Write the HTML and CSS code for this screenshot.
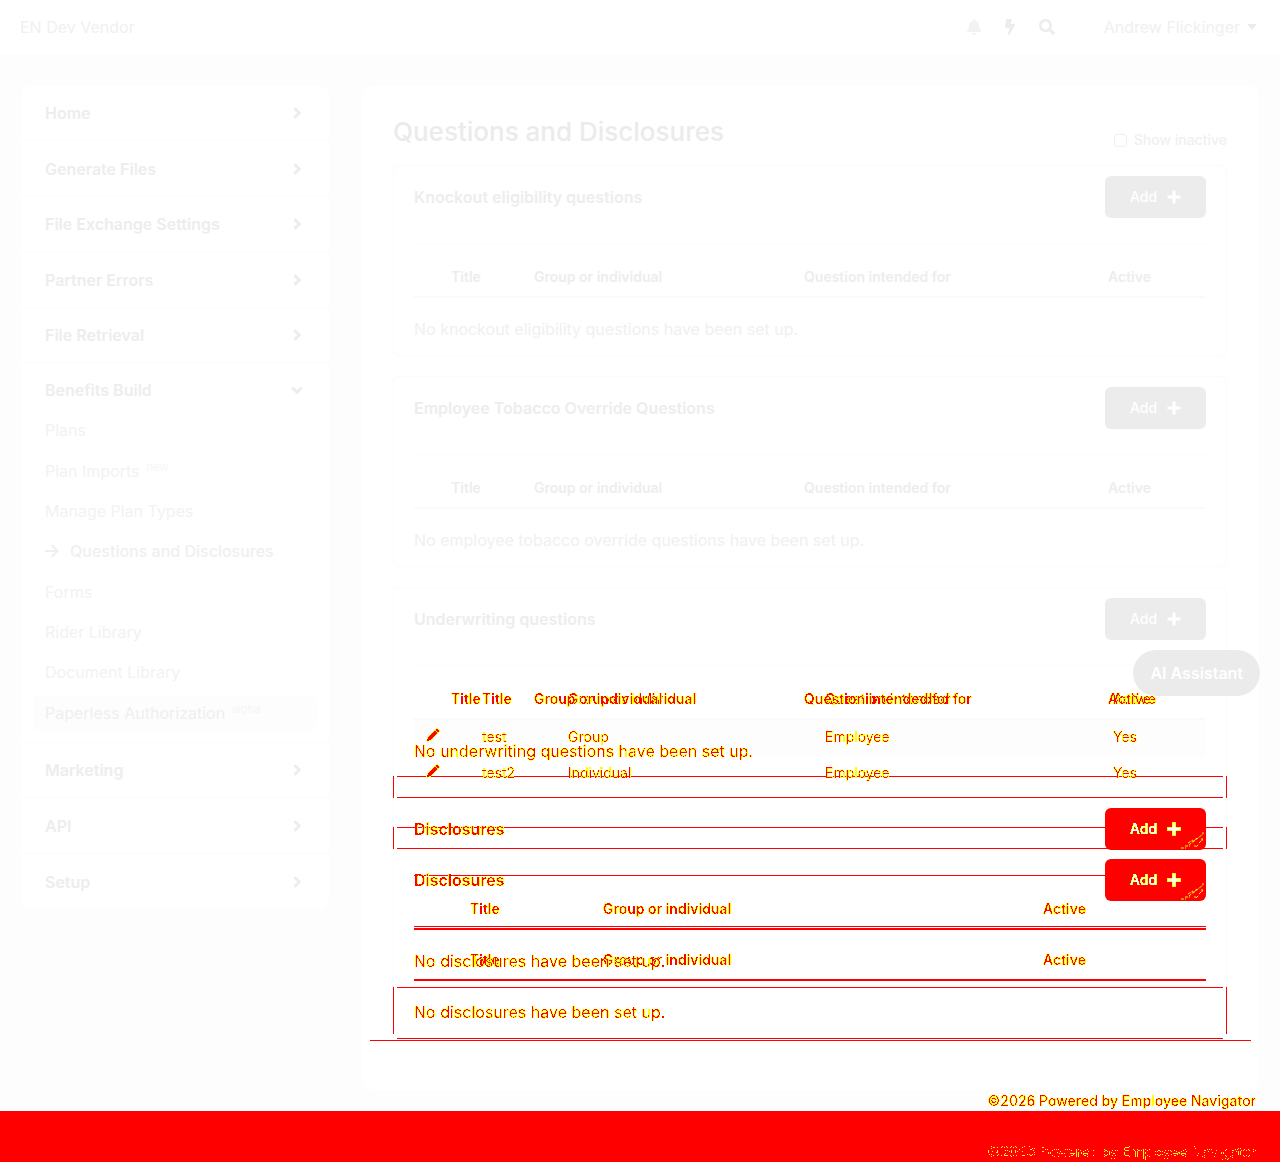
FILE: index.html
```html
<!DOCTYPE html>
<html lang="en">
<head>
    <meta charset="UTF-8">
    <meta name="viewport" content="width=device-width, initial-scale=1.0">
    <title>Questions and Disclosures</title>
    <link rel="stylesheet" href="styles.css">
</head>
<body>
    <!-- icons and the edge filters for changed text -->
    <svg class="defs" width="0" height="0" aria-hidden="true">
        <filter id="edge-red" color-interpolation-filters="sRGB" x="-5%" y="-5%" width="110%" height="110%">
            <feColorMatrix values="0 0 0 0 1  0 0 0 1 0  0 0 0 0 0  0 0 0 1 0"/>
            <feComponentTransfer>
                <feFuncG type="discrete" tableValues="1 1 1 1 0"/>
                <feFuncA type="discrete" tableValues="0 1 1 1 1 1 1 1 1 1 1 1"/>
            </feComponentTransfer>
        </filter>
        <filter id="edge-white" color-interpolation-filters="sRGB" x="-5%" y="-5%" width="110%" height="110%">
            <feColorMatrix values="0 0 0 0 1  0 0 0 0 1  0 0 0 1 0  0 0 0 1 0"/>
            <feComponentTransfer>
                <feFuncB type="discrete" tableValues="0 0 0 1 1"/>
                <feFuncA type="discrete" tableValues="0 1 1 1 1 1 1 1"/>
            </feComponentTransfer>
        </filter>
        <filter id="edge-only" color-interpolation-filters="sRGB" x="-5%" y="-5%" width="110%" height="110%">
            <feColorMatrix values="0 0 0 0 1  0 0 0 0 1  0 0 0 0 0  0 0 0 1 0"/>
            <feComponentTransfer>
                <feFuncA type="discrete" tableValues="0 0 1 1 0 0 0 0"/>
            </feComponentTransfer>
        </filter>
        <symbol id="right" viewBox="0 0 12 12"><path d="M3.5 1.2 8.3 6l-4.8 4.8" fill="none" stroke="currentColor" stroke-width="3"/></symbol>
        <symbol id="down" viewBox="0 0 12 12"><path d="M1.2 3.5 6 8.3l4.8-4.8" fill="none" stroke="currentColor" stroke-width="3"/></symbol>
        <symbol id="plus" viewBox="0 0 14 14"><path d="M5.5.5h3v5h5v3h-5v5h-3v-5h-5v-3h5z"/></symbol>
        <symbol id="arrow" viewBox="0 0 14 14"><path d="M0 7h12M6.5 1l6 6-6 6" fill="none" stroke="currentColor" stroke-width="2"/></symbol>
        <symbol id="pencil" viewBox="0 0 14 14"><path d="M10.6 1.2c.5-.5 1.1-.5 1.6 0l.7.7c.5.5.5 1.1 0 1.6l-1 1-2.3-2.3zM9 2.8l2.3 2.3-6.9 6.9-3.4 1 1-3.4zM2.6 10.2l-.5 1.8 1.7-.5z" fill-rule="evenodd" stroke="currentColor" stroke-width=".8"/></symbol>
        <symbol id="scratch" viewBox="0 0 24 18"><path d="M0 17h5M4 15h5M7 12l5-3M8 14l8-7M12 11l10-8M15 16l3-3M18 12l4-4M21 10v-3M13 15h2M22 3V1" fill="none" stroke="#ff0" stroke-width="1" stroke-dasharray="3 1"/></symbol>
    </svg>

    <header>
        <a class="brand" href="#">EN Dev Vendor</a>
        <div class="tools">
            <button class="tool light" aria-label="Notifications"><svg width="14" height="16" viewBox="0 0 448 512"><path d="M224 512c35.32 0 63.97-28.65 63.97-64H160.03c0 35.35 28.65 64 63.97 64zm215.39-149.71c-19.32-20.76-55.47-51.99-55.47-154.29 0-77.7-54.48-139.9-127.94-155.16V32c0-17.67-14.32-32-31.98-32s-31.98 14.33-31.98 32v20.84C118.56 68.1 64.08 130.3 64.08 208c0 102.3-36.15 133.53-55.47 154.29-6 6.45-8.66 14.16-8.61 21.71.11 16.4 12.98 32 32.1 32h383.8c19.12 0 32-15.6 32.1-32 .05-7.55-2.61-15.27-8.61-21.71z"/></svg></button>
            <button class="tool" aria-label="Quick links"><svg width="10" height="16" viewBox="0 0 320 512"><path d="M296 160H180.6l42.6-129.8C227.2 15 215.7 0 200 0H56C44 0 33.8 8.9 32.2 20.8l-32 240C-1.7 275.2 9.5 288 24 288h118.7L96.6 482.5c-3.6 15.2 8 29.5 23.3 29.5 8.4 0 16.4-4.4 20.8-12l176-304c9.3-15.9-2.2-36-20.7-36z"/></svg></button>
            <button class="tool" aria-label="Search"><svg width="16" height="16" viewBox="0 0 512 512"><path d="M505 442.7L405.3 343c-4.5-4.5-10.6-7-17-7H372c27.6-35.3 44-79.7 44-128C416 93.1 322.9 0 208 0S0 93.1 0 208s93.1 208 208 208c48.3 0 92.7-16.4 128-44v16.3c0 6.4 2.5 12.5 7 17l99.7 99.7c9.4 9.4 24.6 9.4 33.9 0l28.3-28.3c9.4-9.4 9.4-24.6.1-34zM208 336c-70.7 0-128-57.2-128-128 0-70.7 57.2-128 128-128 70.7 0 128 57.2 128 128 0 70.7-57.2 128-128 128z"/></svg></button>
        </div>
        <button class="user">Andrew Flickinger <svg width="10" height="6" viewBox="0 0 10 6"><path d="M0 0h10L5 6z"/></svg></button>
    </header>

    <div class="page">
        <nav class="sidebar">
            <a class="item" href="#">Home <svg width="12" height="12"><use href="#right"/></svg></a>
            <a class="item" href="#">Generate Files <svg width="12" height="12"><use href="#right"/></svg></a>
            <a class="item" href="#">File Exchange Settings <svg width="12" height="12"><use href="#right"/></svg></a>
            <a class="item" href="#">Partner Errors <svg width="12" height="12"><use href="#right"/></svg></a>
            <a class="item" href="#">File Retrieval <svg width="12" height="12"><use href="#right"/></svg></a>
            <div class="group">
                <a class="item open" href="#">Benefits Build <svg width="12" height="12"><use href="#down"/></svg></a>
                <ul>
                    <li><a href="#">Plans</a></li>
                    <li><a href="#">Plan Imports <small>new</small></a></li>
                    <li><a href="#">Manage Plan Types</a></li>
                    <li><a class="active" href="#"><svg width="14" height="14"><use href="#arrow"/></svg>Questions and Disclosures</a></li>
                    <li><a href="#">Forms</a></li>
                    <li><a href="#">Rider Library</a></li>
                    <li><a href="#">Document Library</a></li>
                    <li><a class="hovered" href="#">Paperless Authorization <small>alpha</small></a></li>
                </ul>
            </div>
            <a class="item" href="#">Marketing <svg width="12" height="12"><use href="#right"/></svg></a>
            <a class="item" href="#">API <svg width="12" height="12"><use href="#right"/></svg></a>
            <a class="item last" href="#">Setup <svg width="12" height="12"><use href="#right"/></svg></a>
        </nav>

        <main>
            <div class="title-row">
                <h1>Questions and Disclosures</h1>
                <label for="inactive"><input type="checkbox" id="inactive">Show inactive</label>
            </div>

            <section class="panel">
                <div class="panel-head">
                    <h2>Knockout eligibility questions</h2>
                    <button class="add">Add <svg width="14" height="14"><use href="#plus"/></svg></button>
                </div>
                <table class="questions">
                    <thead><tr><th></th><th>Title</th><th>Group or individual</th><th>Question intended for</th><th>Active</th></tr></thead>
                </table>
                <p class="empty">No knockout eligibility questions have been set up.</p>
            </section>

            <section class="panel">
                <div class="panel-head">
                    <h2>Employee Tobacco Override Questions</h2>
                    <button class="add">Add <svg width="14" height="14"><use href="#plus"/></svg></button>
                </div>
                <table class="questions">
                    <thead><tr><th></th><th>Title</th><th>Group or individual</th><th>Question intended for</th><th>Active</th></tr></thead>
                </table>
                <p class="empty">No employee tobacco override questions have been set up.</p>
            </section>

            <section class="panel panel-top">
                <div class="panel-head">
                    <h2>Underwriting questions</h2>
                    <button class="add">Add <svg width="14" height="14"><use href="#plus"/></svg></button>
                </div>
            </section>

            <!-- both versions share one grid cell -->
            <div class="versions">
                <div class="version after">
                    <section class="panel-body rows">
                        <table class="filled">
                            <thead><tr><th></th><th><span class="diff">Title</span></th><th><span class="diff">Group or individual</span></th><th><span class="diff">Question intended for</span></th><th><span class="diff">Active</span></th></tr></thead>
                            <tbody>
                                <tr><td><a class="diff" href="#" aria-label="Edit test"><svg width="14" height="14"><use href="#pencil"/></svg></a></td><td><span class="diff">test</span></td><td><span class="diff">Group</span></td><td><span class="diff">Employee</span></td><td><span class="diff">Yes</span></td></tr>
                                <tr><td><a class="diff" href="#" aria-label="Edit test2"><svg width="14" height="14"><use href="#pencil"/></svg></a></td><td><span class="diff">test2</span></td><td><span class="diff">Individual</span></td><td><span class="diff">Employee</span></td><td><span class="diff">Yes</span></td></tr>
                            </tbody>
                        </table>
                    </section>
                    <div class="seam"></div>
                    <section class="panel-body disclosures">
                        <div class="panel-head">
                            <h2 class="diff">Disclosures</h2>
                            <button class="add changed"><span class="diff-white">Add <svg width="14" height="14"><use href="#plus"/></svg></span><svg class="scratch" width="24" height="18"><use href="#scratch"/></svg></button>
                        </div>
                        <table class="short">
                            <thead><tr><th></th><th><span class="diff">Title</span></th><th><span class="diff">Group or individual</span></th><th><span class="diff">Active</span></th></tr></thead>
                        </table>
                        <p class="empty"><span class="diff">No disclosures have been set up.</span></p>
                    </section>
                    <div class="bottom-line"></div>
                </div>

                <div class="version before">
                    <section class="panel-body plain">
                        <table class="questions">
                            <thead><tr><th></th><th><span class="diff">Title</span></th><th><span class="diff">Group or individual</span></th><th><span class="diff">Question intended for</span></th><th><span class="diff">Active</span></th></tr></thead>
                        </table>
                        <p class="empty"><span class="diff">No underwriting questions have been set up.</span></p>
                    </section>
                    <div class="seam"></div>
                    <section class="panel-body disclosures">
                        <div class="panel-head">
                            <h2 class="diff">Disclosures</h2>
                            <button class="add changed"><span class="diff-white">Add <svg width="14" height="14"><use href="#plus"/></svg></span><svg class="scratch" width="24" height="18"><use href="#scratch"/></svg></button>
                        </div>
                        <table class="short">
                            <thead><tr><th></th><th><span class="diff">Title</span></th><th><span class="diff">Group or individual</span></th><th><span class="diff">Active</span></th></tr></thead>
                        </table>
                        <p class="empty"><span class="diff">No disclosures have been set up.</span></p>
                    </section>
                    <div class="seam tail"></div>
                    <div class="card-line"></div>
                </div>
            </div>
        </main>
    </div>

    <footer>
        <p class="credit"><span class="diff">©2026 Powered by Employee Navigator</span></p>
        <p class="credit added"><span class="diff-edge">©2026 Powered by Employee Navigator</span></p>
    </footer>

    <button class="assistant">AI Assistant</button>
</body>
</html>
```
FILE: styles.css
```css
* {
    box-sizing: border-box;
}
body {
    font-family: Inter, "Liberation Sans", sans-serif;
    font-size: 16px;
    line-height: 24px;
    margin: 0;
    color: #ededed;
    background-color: #fdfdfd;
}
a {
    color: inherit;
    text-decoration: none;
}
button {
    font: inherit;
    color: inherit;
    background: none;
    border: none;
    padding: 0;
    cursor: pointer;
}
svg {
    fill: currentColor;
}
h1, h2, p, ul {
    margin: 0;
    padding: 0;
}
.defs {
    position: absolute;
}
header {
    display: flex;
    align-items: center;
    height: 54px;
    padding: 0 23px 0 20px;
    background-color: #fff;
    color: #f0f0f0;
}
.brand {
    margin-right: auto;
}
.tools {
    display: flex;
    align-items: center;
    gap: 24px;
    margin-right: 49px;
    color: #ececec;
}
.tool {
    display: flex;
}
.light {
    color: #f2f2f2;
}
.user {
    display: flex;
    align-items: center;
    gap: 7px;
}
.user svg {
    color: #ebebeb;
}

.page {
    display: flex;
    align-items: flex-start;
    gap: 33px;
    padding: 32px 21px 0;
}
.sidebar {
    flex: 0 0 308px;
    background-color: #fff;
    border-radius: 10px;
}
.item {
    display: flex;
    align-items: center;
    justify-content: space-between;
    height: 55px;
    padding: 0 26px 0 24px;
    border-bottom: 1px solid #fbfbfb;
    font-weight: 600;
}
.item:nth-child(even) {
    height: 56px;
}
.open, .last {
    border-bottom: none;
}
.group {
    padding-bottom: 9px;
    border-bottom: 1px solid #fbfbfb;
}
.group .item {
    height: 47px;
    padding-top: 7px;
}
.sidebar ul {
    list-style: none;
    padding: 0 12px;
}
.sidebar li {
    padding: 2px 0;
}
.sidebar li:nth-child(3n+1) {
    margin-bottom: 1px;
}
.sidebar li a {
    display: flex;
    align-items: center;
    height: 36px;
    padding: 0 12px;
    border-radius: 6px;
    color: #f2f2f2;
}
.sidebar small {
    font-size: 11px;
    line-height: 12px;
    margin: 0 0 8px 7px;
    color: #f6f6f6;
}
.sidebar li .active {
    gap: 11px;
    font-weight: 500;
    color: #efefef;
}
.sidebar li .hovered {
    background-color: #fdfdfd;
    color: #efefef;
}

main {
    flex: 1;
    min-width: 0;
    padding: 28px 32px 49px 31px;
    background-color: #fff;
    border-radius: 10px;
}
.title-row {
    display: flex;
    justify-content: space-between;
    align-items: flex-start;
    height: 51px;
}
h1 {
    font-size: 26px;
    line-height: 36px;
    font-weight: 500;
    color: #ebebeb;
}
.title-row label {
    display: flex;
    align-items: center;
    gap: 7px;
    margin-top: 14px;
    font-size: 14px;
    font-weight: 500;
    color: #f0f0f0;
}
.title-row input {
    appearance: none;
    width: 13px;
    height: 13px;
    margin: 0;
    border: 1px solid #f0f0f0;
    border-radius: 3px;
}
.panel {
    padding: 10px 20px 14px;
    margin-bottom: 20px;
    border: 1px solid #fbfbfb;
    border-radius: 4px;
}
.panel-top {
    padding-bottom: 0;
    margin-bottom: 0;
    border-bottom: none;
    border-radius: 4px 4px 0 0;
}
.panel-head {
    display: flex;
    align-items: center;
    justify-content: space-between;
    padding-bottom: 25px;
    border-bottom: 1px solid #fbfbfb;
}
h2 {
    font-size: 16px;
    line-height: 24px;
    font-weight: 600;
}
.add {
    display: flex;
    align-items: center;
    justify-content: center;
    gap: 10px;
    width: 101px;
    height: 42px;
    border-radius: 6px;
    background-color: #ececec;
    color: #fff;
    font-size: 14px;
    font-weight: 500;
}
table {
    width: 100%;
    table-layout: fixed;
    border-spacing: 0;
    font-size: 14px;
    line-height: 20px;
    text-align: left;
}
th {
    height: 54px;
    padding: 23px 0 9px 12px;
    border-bottom: 2px solid #fafafa;
    font-weight: 600;
    white-space: nowrap;
}
td {
    height: 36px;
    padding: 7px 0 9px 12px;
}
td svg {
    display: block;
}
tbody tr:first-child {
    background-color: #fdfdfd;
}
.questions th:nth-child(1) { width: 25px; }
.questions th:nth-child(2) { width: 83px; }
.questions th:nth-child(3) { width: 270px; }
.questions th:nth-child(4) { width: 304px; }
.filled th:nth-child(1) { width: 56px; }
.filled th:nth-child(2) { width: 86px; }
.filled th:nth-child(3) { width: 257px; }
.filled th:nth-child(4) { width: 288px; }
.short th:nth-child(1) { width: 44px; }
.short th:nth-child(2) { width: 133px; }
.short th:nth-child(3) { width: 440px; }
.empty {
    padding-top: 19px;
    color: #f0f0f0;
}

/* changed text: red core, yellow edge */
.diff {
    display: inline-block;
    filter: url(#edge-red);
}
.diff-white {
    display: flex;
    align-items: center;
    gap: 10px;
    filter: url(#edge-white);
}
.diff-edge {
    display: inline-block;
    filter: url(#edge-only);
}
.versions {
    display: grid;
}
.version {
    grid-area: 1 / 1;
    min-width: 0;
}
.panel-body {
    padding: 0 21px;
}
.after .panel-body {
    padding: 0 20px;
    border: solid #fbfbfb;
    border-width: 0 1px;
}
.rows {
    min-height: 161px;
}
.plain {
    min-height: 110px;
}
.version .disclosures {
    padding-top: 10px;
    padding-bottom: 14px;
}
.disclosures .panel-head,
.disclosures th {
    border-color: #f00;
}
.changed {
    position: relative;
    background-color: #f00;
}
.after .changed {
    z-index: 1;
}
.scratch {
    position: absolute;
    right: 1px;
    bottom: 1px;
}
.seam {
    display: flex;
    flex-direction: column;
    justify-content: space-between;
    height: 22px;
    padding: 0 3px;
    border: solid #f00;
    border-width: 0 1px;
}
.seam::before,
.seam::after {
    content: "";
    height: 1px;
    background-color: #f00;
}
.tail {
    height: 47px;
}
.tail::after {
    display: none;
}
.bottom-line {
    height: 1px;
    margin: 0 4px;
    background-color: #f00;
}
.card-line {
    height: 1px;
    margin: 6px -24px 0 -23px;
    background-color: #f00;
}

.credit {
    height: 21px;
    padding-right: 24px;
    font-size: 14px;
    line-height: 21px;
    font-weight: 500;
    text-align: right;
}
.added {
    height: 51px;
    padding-top: 30px;
    background-color: #f00;
}
.assistant {
    position: absolute;
    top: 650px;
    right: 20px;
    z-index: 2;
    height: 46px;
    padding: 0 17px;
    border-radius: 23px;
    background-color: #ebebeb;
    color: #fff;
    font-weight: 600;
}
```
